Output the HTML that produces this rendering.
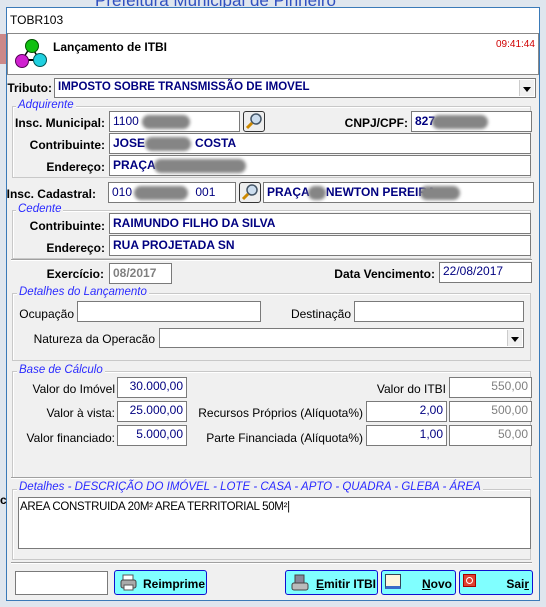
<!DOCTYPE html>
<html><head><meta charset="utf-8"><style>
*{box-sizing:border-box;margin:0;padding:0}
body{width:546px;height:607px;overflow:hidden;position:relative;background:#dfe6ee;font-family:"Liberation Sans",sans-serif;font-size:11px;color:#000}
.a{position:absolute}
.win{left:6px;top:7px;width:534px;height:594px;background:#f0f0f0;border:1px solid #3a7ab8}
.in{position:absolute;background:#fff;border:1px solid #7a7a7a;height:21px;color:#000080;font-size:12px;padding:2px 3px;white-space:nowrap;overflow:hidden}
.b{font-weight:bold}
.lbl{position:absolute;font-size:12px;white-space:nowrap}
.lb{position:absolute;font-size:12px;font-weight:bold;white-space:nowrap;text-align:right}
.grp{position:absolute;border:1px solid #c8c8c8;box-shadow:inset 1px 1px 0 #fff}
.gt{position:absolute;color:#2a2aff;font-style:italic;font-size:11.5px;background:#f0f0f0;padding:0 2px;white-space:nowrap}
.blob{position:absolute;background:#858585;border-radius:10px;filter:blur(1.5px)}
.srch{position:absolute;width:22px;height:21px;border:1px solid #333;border-radius:3px;background:#eee}
.dd{position:absolute;width:15px;border-left:1px solid #ccc;background:#f0f0f0;top:1px;bottom:1px;right:1px}
.dd:after{content:"";position:absolute;left:3px;top:7px;border:4px solid transparent;border-top:5px solid #000}
.btn{position:absolute;top:570px;height:25px;background:#80ffff;border:1px solid #1010d0;border-radius:3px;font-weight:bold;font-size:12px}
.r{text-align:right}
.g{color:#808080}
</style></head><body>
<div class="a" style="left:95px;top:-9px;color:#3050c0;font-size:17px">Prefeitura Municipal de Pinheiro</div>
<div class="a" style="left:0;top:34px;width:6px;height:30px;background:#c88"></div>
<div class="win a"></div>
<div class="a" style="left:7px;top:8px;width:532px;height:25px;background:#fff"></div>
<div class="lbl" style="left:10px;top:13px;font-size:12px">TOBR103</div>
<div class="a" style="left:7px;top:33px;width:532px;height:42px;background:#fff;border:1px solid #888"></div>
<svg class="a" style="left:13px;top:37px" width="36" height="34">
<line x1="18" y1="9" x2="9" y2="23" stroke="#000" stroke-width="1.5"/><line x1="18" y1="9" x2="26" y2="22" stroke="#000" stroke-width="1.5"/><line x1="9" y1="23" x2="26" y2="23" stroke="#000" stroke-width="2"/>
<circle cx="19" cy="9" r="6.5" fill="#10c010" stroke="#050" /><circle cx="9" cy="24" r="6.5" fill="#d020d0" stroke="#505"/><circle cx="27" cy="23" r="6.5" fill="#20d0e0" stroke="#055"/></svg>
<div class="lbl b" style="left:53px;top:40px;font-size:12px">Lançamento de ITBI</div>
<div class="lbl" style="left:496px;top:39px;color:#d00000;font-size:10px">09:41:44</div>

<div class="lb" style="right:494px;top:81px">Tributo:</div>
<div class="in b" style="left:54px;top:78px;width:482px;height:20px;font-size:11.5px">IMPOSTO SOBRE TRANSMISSÃO DE IMOVEL<div class="dd"></div></div>

<div class="grp" style="left:12px;top:106px;width:519px;height:72px"></div>
<div class="gt" style="left:16px;top:99px">Adquirente</div>
<div class="lb" style="right:441px;top:116px">Insc. Municipal:</div>
<div class="in" style="left:109px;top:111px;width:131px">1100</div><div class="blob" style="left:142px;top:115px;width:48px;height:14px"></div>
<div class="srch" style="left:243px;top:111px"><svg width="20" height="19"><circle cx="12" cy="7" r="5" fill="#cde" stroke="#456" stroke-width="1.5"/><line x1="8" y1="11" x2="3" y2="16" stroke="#c80" stroke-width="3"/></svg></div>
<div class="lb" style="right:138px;top:116px">CNPJ/CPF:</div>
<div class="in b" style="left:411px;top:111px;width:121px">827</div><div class="blob" style="left:432px;top:115px;width:56px;height:14px"></div>
<div class="lb" style="right:441px;top:138px">Contribuinte:</div>
<div class="in b" style="left:109px;top:133px;width:422px">JOSE &nbsp;&nbsp;&nbsp;&nbsp;&nbsp;&nbsp;&nbsp;&nbsp;&nbsp;&nbsp;&nbsp;&nbsp;&nbsp;&nbsp;COSTA</div><div class="blob" style="left:145px;top:137px;width:46px;height:14px"></div>
<div class="lb" style="right:441px;top:160px">Endereço:</div>
<div class="in b" style="left:109px;top:155px;width:422px">PRAÇA</div><div class="blob" style="left:154px;top:159px;width:92px;height:14px"></div>

<div class="lb" style="right:450px;top:187px">Insc. Cadastral:</div>
<div class="in" style="left:108px;top:182px;width:128px">010 &nbsp;&nbsp;&nbsp;&nbsp;&nbsp;&nbsp;&nbsp;&nbsp;&nbsp;&nbsp;&nbsp;&nbsp;&nbsp;&nbsp;&nbsp;&nbsp;&nbsp;&nbsp;001</div><div class="blob" style="left:134px;top:186px;width:54px;height:14px"></div>
<div class="srch" style="left:239px;top:182px"><svg width="20" height="19"><circle cx="12" cy="7" r="5" fill="#cde" stroke="#456" stroke-width="1.5"/><line x1="8" y1="11" x2="3" y2="16" stroke="#c80" stroke-width="3"/></svg></div>
<div class="in b" style="left:263px;top:182px;width:271px">PRAÇA &nbsp;&nbsp;&nbsp;&nbsp;NEWTON PEREIRA</div><div class="blob" style="left:308px;top:186px;width:18px;height:14px"></div><div class="blob" style="left:420px;top:186px;width:40px;height:14px"></div>

<div class="grp" style="left:12px;top:210px;width:519px;height:49px"></div>
<div class="gt" style="left:16px;top:203px">Cedente</div>
<div class="lb" style="right:441px;top:219px">Contribuinte:</div>
<div class="in b" style="left:109px;top:213px;width:422px">RAIMUNDO FILHO DA SILVA</div>
<div class="lb" style="right:441px;top:241px">Endereço:</div>
<div class="in b" style="left:109px;top:235px;width:422px">RUA PROJETADA SN</div>
<div class="a" style="left:11px;top:259px;width:521px;border-top:1px solid #a0a0a0;border-bottom:1px solid #fff"></div>

<div class="lb" style="right:442px;top:267px">Exercício:</div>
<div class="in b g" style="left:109px;top:263px;width:63px">08/2017</div>
<div class="lb" style="right:111px;top:267px">Data Vencimento:</div>
<div class="in" style="left:439px;top:262px;width:93px;font-size:12px;padding-top:1px">22/08/2017</div>

<div class="grp" style="left:12px;top:293px;width:519px;height:68px"></div>
<div class="gt" style="left:17px;top:286px">Detalhes do Lançamento</div>
<div class="lbl" style="right:472px;top:307px">Ocupação</div>
<div class="in" style="left:77px;top:301px;width:184px"></div>
<div class="lbl" style="right:195px;top:307px">Destinação</div>
<div class="in" style="left:354px;top:301px;width:170px"></div>
<div class="lbl" style="right:391px;top:332px">Natureza da Operacão</div>
<div class="in" style="left:159px;top:328px;width:365px;height:20px"><div class="dd"></div></div>

<div class="grp" style="left:12px;top:371px;width:519px;height:107px"></div>
<div class="gt" style="left:17px;top:364px">Base de Cálculo</div>
<div class="lbl" style="right:431px;top:382px">Valor do Imóvel</div>
<div class="in r" style="left:117px;top:377px;width:70px;padding-top:1px">30.000,00</div>
<div class="lbl" style="right:431px;top:406px">Valor à vista:</div>
<div class="in r" style="left:117px;top:401px;width:70px;padding-top:1px">25.000,00</div>
<div class="lbl" style="right:431px;top:431px">Valor financiado:</div>
<div class="in r" style="left:117px;top:425px;width:70px;padding-top:1px">5.000,00</div>
<div class="lbl" style="right:100px;top:382px">Valor do ITBI</div>
<div class="in r g" style="left:449px;top:377px;width:83px;padding-top:1px">550,00</div>
<div class="lbl" style="right:183px;top:406px">Recursos Próprios (Alíquota%)</div>
<div class="in r" style="left:366px;top:401px;width:81px;padding-top:1px">2,00</div>
<div class="in r g" style="left:449px;top:401px;width:83px;padding-top:1px">500,00</div>
<div class="lbl" style="right:183px;top:431px">Parte Financiada (Alíquota%)</div>
<div class="in r" style="left:366px;top:425px;width:81px;padding-top:1px">1,00</div>
<div class="in r g" style="left:449px;top:425px;width:83px;padding-top:1px">50,00</div>
<div class="a" style="left:11px;top:477px;width:521px;border-top:1px solid #a0a0a0;border-bottom:1px solid #fff"></div>

<div class="grp" style="left:12px;top:489px;width:519px;height:71px"></div>
<div class="gt" style="left:17px;top:481px">Detalhes - DESCRIÇÃO DO IMÓVEL - LOTE - CASA - APTO - QUADRA - GLEBA - ÁREA</div>
<div class="in" style="left:18px;top:497px;width:513px;height:52px;color:#000;font-size:11.5px;padding:3px 1px;letter-spacing:-0.3px">AREA CONSTRUIDA 20M² AREA TERRITORIAL 50M²|</div>
<div class="a" style="left:11px;top:562px;width:521px;border-top:1px solid #a0a0a0;border-bottom:1px solid #fff"></div>
<div class="lbl b" style="left:0;top:493px">c</div>

<div class="in" style="left:15px;top:571px;width:93px;height:24px"></div>
<div class="btn" style="left:114px;width:93px"><svg class="a" style="left:5px;top:3px" width="18" height="18"><rect x="3" y="1" width="10" height="6" fill="#fff" stroke="#555"/><rect x="1" y="6" width="15" height="8" rx="2" fill="#aaa" stroke="#444"/><rect x="4" y="11" width="9" height="5" fill="#fff" stroke="#555"/></svg><span class="a" style="left:28px;top:6px">Reimprime</span></div>
<div class="btn" style="left:285px;width:93px"><svg class="a" style="left:5px;top:3px" width="18" height="18"><rect x="4" y="1" width="9" height="10" fill="#889" stroke="#444"/><rect x="1" y="9" width="16" height="7" rx="2" fill="#bbb" stroke="#444"/></svg><span class="a" style="left:30px;top:6px"><u>E</u>mitir ITBI</span></div>
<div class="btn" style="left:381px;width:75px"><div class="a" style="left:3px;top:3px;width:16px;height:15px;background:#fdf6dd;border:1px solid #345;border-bottom:3px solid #3a6ac8"></div><span class="a" style="right:3px;top:6px"><u>N</u>ovo</span></div>
<div class="btn" style="left:459px;width:74px"><div class="a" style="left:3px;top:3px;width:13px;height:13px;background:#e04030;border:1px solid #a00"><div style="margin:2px;width:7px;height:7px;border:1px solid #fff;border-radius:50%"></div></div><span class="a" style="right:3px;top:6px">Sai<u>r</u></span></div>
</body></html>
